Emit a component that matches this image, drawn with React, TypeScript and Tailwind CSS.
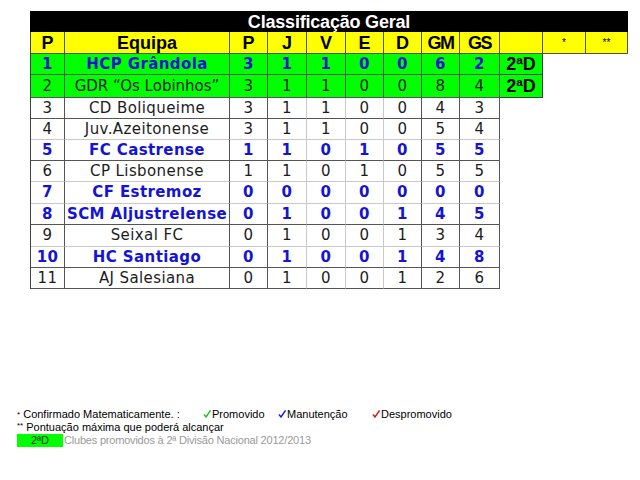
import React from 'react';

type Row = {
  pos: number;
  team: string;
  stats: number[];
  bold?: boolean;
  promoted?: boolean;
  h: string;
};

const rows: Row[] = [
  { pos: 1, team: 'HCP Grândola', stats: [3, 1, 1, 0, 0, 6, 2], bold: true, promoted: true, h: 'h-[21px]' },
  { pos: 2, team: 'GDR “Os Lobinhos”', stats: [3, 1, 1, 0, 0, 8, 4], promoted: true, h: 'h-[23px]' },
  { pos: 3, team: 'CD Boliqueime', stats: [3, 1, 1, 0, 0, 4, 3], h: 'h-[21px]' },
  { pos: 4, team: 'Juv.Azeitonense', stats: [3, 1, 1, 0, 0, 5, 4], h: 'h-[21px]' },
  { pos: 5, team: 'FC Castrense', stats: [1, 1, 0, 1, 0, 5, 5], bold: true, h: 'h-[21px]' },
  { pos: 6, team: 'CP Lisbonense', stats: [1, 1, 0, 1, 0, 5, 5], h: 'h-[21px]' },
  { pos: 7, team: 'CF Estremoz', stats: [0, 0, 0, 0, 0, 0, 0], bold: true, h: 'h-[22px]' },
  { pos: 8, team: 'SCM Aljustrelense', stats: [0, 1, 0, 0, 1, 4, 5], bold: true, h: 'h-[21px]' },
  { pos: 9, team: 'Seixal FC', stats: [0, 1, 0, 0, 1, 3, 4], h: 'h-[22px]' },
  { pos: 10, team: 'HC Santiago', stats: [0, 1, 0, 0, 1, 4, 8], bold: true, h: 'h-[21px]' },
  { pos: 11, team: 'AJ Salesiana', stats: [0, 1, 0, 0, 1, 2, 6], h: 'h-[21px]' },
];

// column widths (cell incl. its right border)
const widths = ['w-[34px]', 'w-[165px]', 'w-[38px]', 'w-[39px]', 'w-[39px]', 'w-[38px]', 'w-[38px]', 'w-[38px]', 'w-[40px]'];
// right edges J|V, V|E, E|D are drawn light
const lightRight = [false, false, false, true, true, true, false, false, false];

function Check({ color }: { color: string }) {
  return (
    <svg width="8" height="8" viewBox="0 0 8 8" className="inline-block mr-[1px] -mt-[2px]">
      <path d="M1 4.5 L3 7 L7.5 0.5" fill="none" stroke={color} strokeWidth="1.4" />
    </svg>
  );
}

export default function App() {
  return (
    <div className="w-[640px] h-[480px] bg-white pt-[11px] pl-[30px]">
      <div className="w-[598px] h-[21px] bg-black flex items-center justify-center text-white font-bold text-[18px] leading-none font-['Liberation_Sans',Arial,sans-serif] tracking-[-0.2px]">
        Classificação Geral
      </div>

      {/* header */}
      <div className="flex w-[598px] h-[22px] bg-[#ffff00] border-l border-[#404040] font-['Liberation_Sans',Arial,sans-serif] text-black">
        {['P', 'Equipa', 'P', 'J', 'V', 'E', 'D', 'GM', 'GS'].map((t, i) => (
          <div
            key={i}
            className={`${widths[i]} flex items-center justify-center border-r border-b border-[#505050] font-bold text-[18px] leading-none ${t === 'GM' || t === 'GS' ? 'tracking-[-1.5px] text-[17px]' : ''}`}
          >
            {t}
          </div>
        ))}
        <div className="w-[43px] border-r border-b border-[#505050]" />
        <div className="w-[43px] flex items-center justify-center border-r border-b border-[#505050] text-[10px]">*</div>
        <div className="w-[42px] flex items-center justify-center border-r border-b border-[#505050] text-[10px]">**</div>
      </div>

      {/* body */}
      {rows.map((r, ri) => {
        const next = rows[ri + 1];
        const bottom = next && next.bold && !r.promoted ? 'border-b-[#c8c8c8]' : 'border-b-[#555555]';
        const cells = [String(r.pos), r.team, ...r.stats.map(String)];
        return (
          <div
            key={r.pos}
            className={`flex ${r.h} border-l border-l-[#404040] font-['DejaVu_Sans',Verdana,sans-serif] text-[15px] leading-none tracking-[0.4px] ${
              r.promoted ? 'bg-[#00ff00]' : 'bg-white'
            } ${r.bold ? 'font-bold text-[#1414d2]' : 'text-[#1c1c1c]'} w-fit`}
          >
            {cells.map((c, i) => (
              <div
                key={i}
                className={`${widths[i]} flex items-center justify-center whitespace-nowrap border-r border-b ${bottom} ${
                  lightRight[i] && !r.promoted ? 'border-r-[#c8c8c8]' : 'border-r-[#555555]'
                } ${i === 1 && r.pos === 2 ? 'tracking-[0px]' : ''}`}
              >
                {c}
              </div>
            ))}
            {r.promoted && (
              <div className="w-[43px] flex items-center justify-center border-r border-b border-[#404040] bg-[#00ff00] font-['Liberation_Sans',Arial,sans-serif] font-bold text-[18px] text-black tracking-normal">
                2ªD
              </div>
            )}
          </div>
        );
      })}

      {/* legend */}
      <div className="mt-[119px] -ml-[13px] font-['Liberation_Sans',Arial,sans-serif] text-[11px] leading-[13px] text-black">
        <div className="flex h-[13px] items-center">
          <span className="w-[186px] whitespace-nowrap">
            <span className="text-[8px] align-top">*</span> Confirmado Matematicamente. :
          </span>
          <span className="w-[75px] whitespace-nowrap">
            <Check color="#22bb22" />Promovido
          </span>
          <span className="w-[94px] whitespace-nowrap">
            <Check color="#1a1ad0" />Manutenção
          </span>
          <span className="whitespace-nowrap">
            <Check color="#e01010" />Despromovido
          </span>
        </div>
        <div className="flex h-[13px] items-center whitespace-nowrap">
          <span className="text-[8px] align-top mr-[3px] -mt-[4px]">**</span>Pontuação máxima que poderá alcançar
        </div>
        <div className="flex h-[13px] items-center whitespace-nowrap">
          <div className="w-[46px] h-[13px] bg-[#00ff00] flex items-center justify-center text-[11px] text-[#333333]">2ªD</div>
          <span className="ml-[1px] text-[#9a9a9a] tracking-[-0.2px]">Clubes promovidos à 2ª Divisão Nacional 2012/2013</span>
        </div>
      </div>
    </div>
  );
}
